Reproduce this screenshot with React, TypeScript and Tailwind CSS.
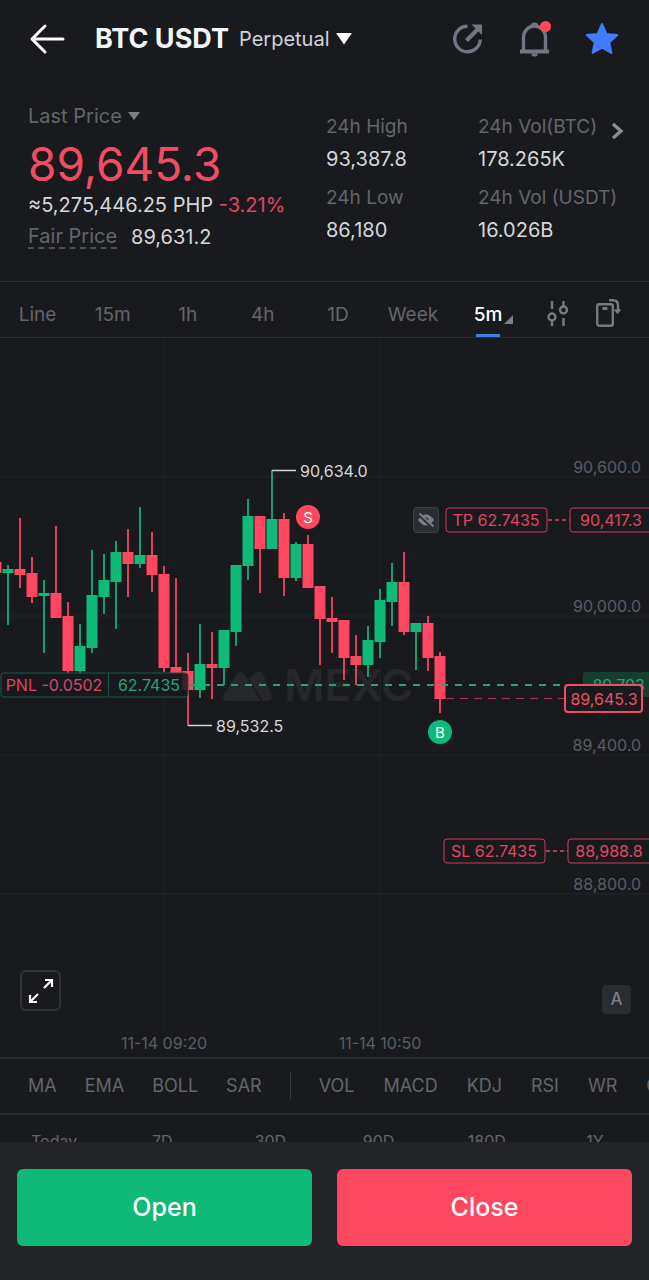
import { useState } from 'react';
import clsx from 'clsx';

const intervals = ['Line', '15m', '1h', '4h', '1D', 'Week', '5m'];

const mainIndicators = ['MA', 'EMA', 'BOLL', 'SAR'];
const subIndicators = ['VOL', 'MACD', 'KDJ', 'RSI', 'WR', 'CCI'];

const ranges = ['Today', '7D', '30D', '90D', '180D', '1Y'];

const stats = [
  [
    { label: '24h High', value: '93,387.8' },
    { label: '24h Low', value: '86,180' },
  ],
  [
    { label: '24h Vol(BTC)', value: '178.265K' },
    { label: '24h Vol (USDT)', value: '16.026B' },
  ],
];

const UP = '#0fba78';
const DOWN = '#ff4761';

// [direction, high, body top, body bottom, low] in chart units, one every 12
const candles: [number, number, number, number, number][] = [
  [-1, 223, 223, 234, 234],
  [1, 226, 230, 234, 286],
  [-1, 179, 230, 236, 249],
  [-1, 218, 234, 258, 264],
  [1, 241, 254, 257, 314],
  [-1, 187, 254, 279, 279],
  [-1, 263, 277, 332, 334],
  [1, 285, 307, 332, 335],
  [1, 211, 256, 309, 314],
  [1, 215, 241, 258, 275],
  [1, 202, 213, 243, 290],
  [-1, 190, 213, 225, 258],
  [1, 168, 216, 225, 229],
  [-1, 193, 216, 236, 253],
  [-1, 227, 235, 329, 333],
  [-1, 239, 328, 334, 334],
  [-1, 314, 332, 351, 387],
  [1, 285, 325, 351, 359],
  [-1, 293, 325, 329, 360],
  [1, 291, 291, 329, 346],
  [1, 226, 226, 293, 307],
  [1, 160, 177, 227, 241],
  [-1, 177, 177, 210, 254],
  [1, 131, 180, 210, 210],
  [-1, 174, 180, 239, 257],
  [1, 203, 205, 239, 242],
  [-1, 196, 205, 249, 249],
  [-1, 247, 247, 280, 326],
  [-1, 258, 279, 283, 314],
  [-1, 281, 281, 319, 341],
  [-1, 296, 317, 326, 346],
  [1, 287, 301, 326, 338],
  [1, 250, 261, 303, 319],
  [1, 224, 243, 263, 287],
  [-1, 213, 243, 293, 296],
  [1, 284, 284, 293, 331],
  [-1, 277, 284, 319, 332],
  [-1, 313, 317, 360, 374],
];

const priceLines = [
  { y: 138, label: '90,600.0' },
  { y: 277, label: '90,000.0' },
  { y: 416, label: '89,400.0' },
  { y: 555, label: '88,800.0' },
];

const timeLines = [
  { x: 164, label: '11-14 09:20' },
  { x: 380, label: '11-14 10:50' },
];

function Header() {
  return (
    <header className="flex h-[77px] items-center pl-[29px] pr-[30px]">
      <button aria-label="Back" className="mr-[30px]">
        <svg width="36" height="32" viewBox="0 0 36 32" fill="none" stroke="#fff" strokeWidth="3" strokeLinecap="round" strokeLinejoin="round">
          <path d="M34 16H3M16 3 3 16l13 13" />
        </svg>
      </button>
      <h1 className="text-[27px] font-bold leading-8 text-[#f5f6fa]">BTC USDT</h1>
      <button className="ml-2.5 flex items-center gap-1.5 text-xl text-[#d2d4d9]">
        Perpetual
        <svg width="16" height="12" viewBox="0 0 16 12" fill="#fff">
          <path d="M0 0h16L8 11.500z" />
        </svg>
      </button>
      <div className="ml-auto flex items-center gap-[34px]">
        <button aria-label="Share">
          <svg width="34" height="34" viewBox="0 0 34 34" fill="none" stroke="#707682" strokeWidth="3.400">
            <path d="M16.500 4.200A12.800 12.800 0 1 0 29.300 17.500" />
            <path d="m15.500 18.500 11-11" strokeWidth="4" />
            <path d="M20.500 2.500H31v10.500z" fill="#707682" stroke="none" />
          </svg>
        </button>
        <button aria-label="Notifications" className="relative">
          <svg width="32" height="36" viewBox="0 0 32 36" fill="none" stroke="#707682" strokeWidth="3.400">
            <path d="M4.500 30V16.500a11 11.500 0 0 1 22 0V30" />
            <path d="M1 30.500h29" strokeWidth="4" />
            <path d="M11.500 5.500a4 4 0 0 1 8 0M12.500 32.500h6v1a3 2 0 0 1-6 0z" fill="#707682" stroke="none" />
          </svg>
          <span className="absolute right-0 top-0 size-[11px] rounded-full bg-[#ff4761]" />
        </button>
        <button aria-label="Remove from favorites">
          <svg width="34" height="34" viewBox="0 0 34 34" fill="#3f7cff" stroke="#3f7cff" strokeWidth="2" strokeLinejoin="round">
            <path d="m17 2 4.400 9.900 10.800 1.200-8 7.300 2.200 10.600L17 25.600 7.600 31l2.200-10.600-8-7.300 10.800-1.200z" />
          </svg>
        </button>
      </div>
    </header>
  );
}

function Ticker() {
  return (
    <section className="grid grid-cols-[298fr_152fr_147fr] border-b border-[#2c2e32] pb-6 pl-7 pr-6 pt-[27px] text-xl leading-6">
      <div>
        <button className="flex h-6 items-center gap-1.5 text-[#62656c]">
          Last Price
          <svg width="12" height="8" viewBox="0 0 12 8" fill="#7b7f89">
            <path d="M0 0h12L6 8z" />
          </svg>
        </button>
        <p className="mt-2 text-[46px] leading-[56px] text-[#f04c65]">89,645.3</p>
        <p className="mt-px whitespace-nowrap text-[#d5d7db]">
          ≈5,275,446.25 PHP <span className="text-[#e04560]">-3.21%</span>
        </p>
        <p className="mt-2 flex items-center gap-3.5">
          <button className="border-b-2 border-dashed border-[#4c4f56] leading-[22px] text-[#62656c]">Fair Price</button>
          <span className="text-[#d5d7db]">89,631.2</span>
        </p>
      </div>
      {stats.map((column, i) => (
        <dl key={i} className="relative space-y-[15px] whitespace-nowrap pt-[11px]">
          {column.map(stat => (
            <div key={stat.label} className="space-y-2">
              <dt className="text-[19px] text-[#62656c]">{stat.label}</dt>
              <dd className="text-[#d5d7db]">{stat.value}</dd>
            </div>
          ))}
          {i === 1 && (
            <button aria-label="More stats" className="absolute right-0 top-[18px]">
              <svg className="block" width="15" height="18" viewBox="0 0 15 18" fill="none" stroke="#8a8d95" strokeWidth="3.400">
                <path d="m3 2 8 7-8 7" />
              </svg>
            </button>
          )}
        </dl>
      ))}
    </section>
  );
}

function IntervalBar() {
  const [active, setActive] = useState('5m');

  return (
    <nav className="flex h-14 border-b border-[#2c2e32] text-[19px]">
      <div className="grid w-[81%] grid-cols-7">
        {intervals.map(item => (
          <button
            key={item}
            onClick={() => setActive(item)}
            className={clsx(
              'relative flex items-center justify-center pt-3',
              item === active ? 'font-medium text-white' : 'text-[#62656c]'
            )}
          >
            {item}
            {item === '5m' && (
              <svg className="absolute bottom-3 right-3" width="10" height="10" viewBox="0 0 10 10" fill="#7b7f89">
                <path d="M9 0v9H0z" />
              </svg>
            )}
            {item === active && <span className="absolute bottom-0 h-[3px] w-6 bg-[#477be0]" />}
          </button>
        ))}
      </div>
      <div className="flex flex-1 items-center justify-between pl-5 pr-7 pt-1.5">
        <button aria-label="Chart settings">
          <svg width="24" height="28" viewBox="0 0 24 28" fill="none" stroke="#777a80" strokeWidth="2.400">
            <circle cx="6" cy="18" r="3.500" />
            <circle cx="17.500" cy="11" r="3.500" />
            <path d="M6 2v8M6 22v5M17.500 2v5M17.500 19v8" />
          </svg>
        </button>
        <button aria-label="Rotate chart">
          <svg width="26" height="30" viewBox="0 0 26 30" fill="none" stroke="#777a80" strokeWidth="2.400">
            <rect x="2.200" y="6.200" width="15.600" height="21.600" rx="2" />
            <path d="M7.500 10.500h5" strokeWidth="3" />
            <path d="M14 2.200h4q5 0 5 5V13" />
            <path d="M18.500 11.500h8L22.500 16z" fill="#777a80" stroke="none" />
          </svg>
        </button>
      </div>
    </nav>
  );
}

function OrderTag({ y, x, tag, price }: { y: number; x: number; tag: string; price: string }) {
  return (
    <g fontSize="16" fill="#e04560" textAnchor="middle">
      <path d={`M${x + 102} ${y}h22`} stroke="#e04560" strokeWidth="1.500" strokeDasharray="4 3" />
      <rect x={x} y={y - 12} width="101" height="24" rx="3" fill="#191a1e" stroke="#c93f58" />
      <text x={x + 50} y={y + 6}>{tag}</text>
      <rect x={x + 124} y={y - 12} width="90" height="24" rx="3" fill="#191a1e" stroke="#c93f58" />
      <text x={x + 165} y={y + 6}>{price}</text>
    </g>
  );
}

function Chart() {
  return (
    <section className="relative border-b-2 border-[#2a2c30]">
      <svg className="block w-full" viewBox="0 -1 649 719" fontFamily="Inter, sans-serif" role="img" aria-label="BTC USDT 5 minute candles">
        {/* Grid */}
        <g stroke="#232529">
          {priceLines.map(line => (
            <path key={line.y} d={`M0 ${line.y}h649`} />
          ))}
          {timeLines.map(line => (
            <path key={line.x} d={`M${line.x} 0v694`} />
          ))}
        </g>

        {/* Watermark */}
        <g fill="#25272b">
          <path d="M226 362c-3 0-4-4-2-7l12-19c2-4 7-4 9 0l16 26z" />
          <path d="m249 340 5-5c2-3 7-3 9 0l8 19c2 4 1 8-3 8h-5z" />
          <text x="284" y="362" fontSize="44" fontWeight="600">MEXC</text>
        </g>

        {/* Axis labels */}
        <g fontSize="16" fill="#5a5d63">
          {priceLines.map(line => (
            <text key={line.y} x="641" y={line.y - 4} textAnchor="end">{line.label}</text>
          ))}
          {timeLines.map(line => (
            <text key={line.x} x={line.x} y="710" textAnchor="middle">{line.label}</text>
          ))}
        </g>

        {/* Candles */}
        {candles.map(([dir, high, top, bottom, low], i) => {
          const x = i * 12 - 4;
          return (
            <g key={i} fill={dir > 0 ? UP : DOWN}>
              <rect x={x - 1} y={high} width="2" height={low - high} opacity="0.85" />
              <rect x={x - 5.5} y={top} width="11" height={bottom - top} />
            </g>
          );
        })}

        {/* High and low markers */}
        <g fontSize="16" fill="#d5d7db">
          <path d="M272 131.500h24M188 386.500h24" stroke="#d5d7db" strokeWidth="1.500" />
          <text x="300" y="138">90,634.0</text>
          <text x="216" y="393">89,532.5</text>
        </g>

        {/* Position */}
        <path d="M189 346h376" stroke="#27a274" strokeWidth="2" strokeDasharray="7 7" />
        <rect x="1" y="334" width="187" height="24" rx="3" fill="#191a1e" fillOpacity="0.85" stroke="#125c43" />
        <path d="M108.500 334v24" stroke="#125c43" />
        <g fontSize="16" textAnchor="middle">
          <text x="54" y="352" fill="#d94560">PNL -0.0502</text>
          <text x="149" y="352" fill="#27a274">62.7435</text>
        </g>
        <rect x="583" y="333" width="70" height="25" rx="3" fill="#15402f" />
        <text x="645" y="352" fontSize="16" fill="#27a274" textAnchor="end">89,703</text>

        {/* Last price */}
        <path d="M446 359.500h118" stroke="#a53a4e" strokeDasharray="8 6" />
        <rect x="565" y="346" width="77" height="27" rx="3" fill="#191a1e" stroke="#f04c65" strokeWidth="2" />
        <text x="604" y="366" fontSize="16" fill="#f04c65" textAnchor="middle">89,645.3</text>

        <OrderTag x={446} y={181} tag="TP 62.7435" price="90,417.3" />
        <OrderTag x={444} y={512} tag="SL 62.7435" price="88,988.8" />

        {/* Trades */}
        <g fontSize="15" textAnchor="middle">
          <circle cx="308" cy="178" r="12" fill={DOWN} />
          <text x="308" y="184" fill="#fff">S</text>
          <circle cx="440" cy="393" r="12" fill={UP} />
          <text x="440" y="399" fill="#fff">B</text>
        </g>

        {/* Hide orders */}
        <g>
          <rect x="413.500" y="168.500" width="25" height="25" rx="3" fill="#2a2d32" stroke="#3b3f45" />
          <path d="M418 181q8-11 16 0-8 11-16 0z" fill="#7b7f89" />
          <circle cx="426" cy="181" r="2.500" fill="#2a2d32" />
          <path d="m418.500 175 14 13" stroke="#2a2d32" strokeWidth="3.500" />
          <path d="m419.500 174.500 14 13" stroke="#7b7f89" strokeWidth="1.800" />
        </g>
      </svg>

      <button
        aria-label="Full screen"
        className="absolute bottom-[46px] left-5 flex size-[41px] items-center justify-center rounded-md border-2 border-[#313338] bg-[#191a1e]"
      >
        <svg width="26" height="26" viewBox="0 0 26 26" fill="none" stroke="#fff" strokeWidth="2.200">
          <path d="m16 10 7.500-7.500M17 2h7v7M10 16l-7.500 7.500M2 17v7h7" />
        </svg>
      </button>
      <button className="absolute bottom-[43px] right-[18px] size-[29px] rounded bg-[#292c31] text-[17px] font-medium text-[#7b7f86]">
        A
      </button>
    </section>
  );
}

function Indicators() {
  return (
    <div className="flex h-14 items-center gap-7 overflow-hidden whitespace-nowrap border-b-2 border-[#2a2c30] pl-7 text-lg text-[#62656c]">
      {mainIndicators.map(item => (
        <button key={item}>{item}</button>
      ))}
      <span className="h-7 w-px shrink-0 bg-[#36393e]" />
      <div className="flex gap-[29px]">
        {subIndicators.map(item => (
          <button key={item}>{item}</button>
        ))}
      </div>
    </div>
  );
}

export default function App() {
  return (
    <div className="flex h-screen flex-col bg-[#191a1e] font-[Inter,sans-serif]">
      <main className="min-h-0 flex-1 overflow-hidden">
        <Header />
        <Ticker />
        <IntervalBar />
        <Chart />
        <Indicators />
        <div className="grid grid-cols-6 pt-3.5 text-center text-base text-[#62656c]">
          {ranges.map(item => (
            <button key={item}>{item}</button>
          ))}
        </div>
      </main>

      <footer className="flex gap-[25px] bg-[#232427] px-[17px] pb-[34px] pt-[27px] text-[25px] font-medium text-white">
        <button className="h-[77px] flex-1 rounded-md bg-[#0fba78]">Open</button>
        <button className="h-[77px] flex-1 rounded-md bg-[#ff4761]">Close</button>
      </footer>
    </div>
  );
}
